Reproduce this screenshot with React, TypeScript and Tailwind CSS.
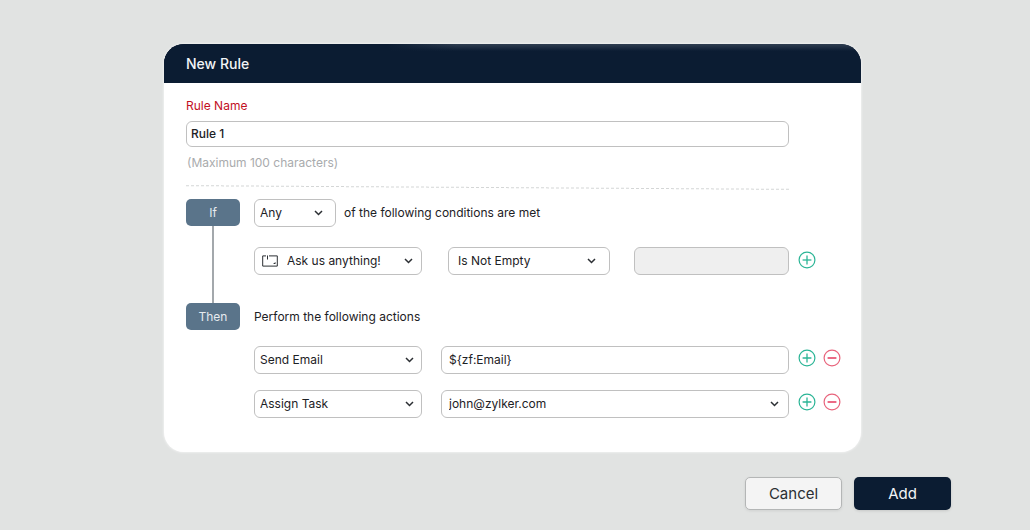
import React from 'react';

const font = { fontFamily: 'Inter, "Noto Sans", sans-serif' };

const Chevron = () => (
  <svg viewBox="0 0 9 6" className="h-[6px] w-[9px] shrink-0" fill="none" stroke="#2b2f33" strokeWidth="1.5">
    <path d="M1 1 4.5 4.5 8 1" />
  </svg>
);

const Circle = ({ minus }: { minus?: boolean }) => {
  const color = minus ? '#e8647c' : '#2bb596';
  return (
    <svg viewBox="0 0 18 18" className="h-[18px] w-[18px]" fill="none" stroke={color} strokeWidth="1.2">
      <circle cx="9" cy="9" r="7.9" />
      <path d="M4.6 9h8.8" stroke={minus ? '#e5385c' : color} strokeWidth="1.3" />
      {!minus && <path d="M9 4.6v8.8" strokeWidth="1.3" />}
    </svg>
  );
};

const Select = ({ label, className, icon }: { label: string; className: string; icon?: boolean }) => (
  <div className={`flex h-[28px] shrink-0 items-center rounded-[6px] border-[1.5px] border-[#c0c0c0] bg-white text-[12px] text-[#1d2125] ${className}`}>
    {icon && (
      <svg viewBox="0 0 16 12" className="ml-[2px] mr-[9px] h-[12px] w-[16px]" fill="none" stroke="#2b2f33" strokeWidth="1">
        <path d="M4 .9H.7v10.2h14.6V.9H7" />
        <path d="M5.5 .5v4" />
        <path d="M11 9h2.5V7z" fill="#2b2f33" stroke="none" />
      </svg>
    )}
    <span className="flex-1 truncate">{label}</span>
    <Chevron />
  </div>
);

const Badge = ({ label }: { label: string }) => (
  <div className="flex h-[27px] w-[54px] items-center justify-center rounded-[5px] bg-[#5a748a] text-[12px] text-[#e6ebef]">
    {label}
  </div>
);

export default function App() {
  return (
    <div className="flex h-[530px] w-[1030px] flex-col overflow-hidden bg-[#e1e3e2] pl-[164px] pt-[44px]" style={font}>
      <div className="h-[408px] w-[697px] overflow-hidden rounded-[20px] bg-white shadow-[0_0_3px_rgba(255,255,255,0.9)]">
        <div className="flex h-[39px] items-center bg-[#0b1c32] bg-[linear-gradient(90deg,#0b1c32_32%,transparent_42%),linear-gradient(180deg,#2f3e51,#0b1c32_7px)] pl-[22px] text-[14px] font-medium text-[#f2f4f6]">New Rule</div>

        <div className="pl-[22px] pr-[20px] pt-[15px]">
          <div className="text-[12px] leading-[15px] text-[#c2101f]">Rule Name</div>
          <div className="mt-[8px] flex h-[26px] w-[603px] items-center rounded-[6px] border-[1.5px] border-[#c0c0c0] pl-[4px] text-[12px] font-medium text-[#1d2125]">
            Rule 1
          </div>
          <div className="mt-[8px] pl-[1px] text-[12px] leading-[16px] text-[#a9abad]">(Maximum 100 characters)</div>
          <div className="mt-[16px] w-[603px] rotate-[0.35deg] border-t border-dashed border-[#d4d6d6]" />

          <div className="mt-[11px] flex gap-[14px]">
            <div className="flex w-[54px] flex-col items-center">
              <Badge label="If" />
              <div className="h-[77px] w-[2px] bg-[#a3a8ac]" />
              <Badge label="Then" />
            </div>

            <div className="flex-1">
              <div className="flex items-center gap-[8px]">
                <Select label="Any" className="w-[82px] pl-[5px] pr-[12px]" />
                <span className="text-[12px] text-[#1d2125]">of the following conditions are met</span>
              </div>

              <div className="mt-[20px] flex items-start">
                <Select label="Ask us anything!" className="w-[168px] pl-[5px] pr-[8px]" icon />
                <Select label="Is Not Empty" className="ml-[26px] w-[162px] pl-[9px] pr-[13px]" />
                <div className="ml-[24px] h-[28px] w-[155px] shrink-0 rounded-[6px] border-[1.5px] border-[#c0c0c0] bg-[#efefef]" />
                <div className="ml-[9px] mt-[4px]">
                  <Circle />
                </div>
              </div>

              <div className="mt-[28px] flex h-[27px] items-center text-[12px] text-[#1d2125]">Perform the following actions</div>
            </div>
          </div>

          <div className="ml-[68px] mt-[16px] flex flex-col gap-[16px]">
            <div className="flex items-start">
              <Select label="Send Email" className="w-[168px] pl-[5px] pr-[7px]" />
              <div className="ml-[19px] flex h-[28px] w-[348px] shrink-0 items-center rounded-[6px] border-[1.5px] border-[#c0c0c0] pl-[7px] text-[12px] text-[#1d2125]">
                {'${zf:Email}'}
              </div>
              <div className="ml-[9px] mt-[3px] flex gap-[7px]">
                <Circle />
                <Circle minus />
              </div>
            </div>
            <div className="flex items-start">
              <Select label="Assign Task" className="w-[168px] pl-[5px] pr-[7px]" />
              <Select label="john@zylker.com" className="ml-[19px] w-[348px] pl-[7px] pr-[9px]" />
              <div className="ml-[9px] mt-[3px] flex gap-[7px]">
                <Circle />
                <Circle minus />
              </div>
            </div>
          </div>
        </div>
      </div>

      <div className="mt-[25px] flex justify-end gap-[12px] pr-[79px] text-[15px]">
        <button className="h-[33px] w-[97px] rounded-[5px] border border-[#b4b6b6] bg-[#f4f4f4] pt-[1px] text-[#2b2f33] shadow-[0_1px_3px_rgba(0,0,0,0.08)]">Cancel</button>
        <button className="h-[33px] w-[97px] rounded-[5px] bg-[#0b1c32] pt-[1px] text-[#f2f4f6] shadow-[0_1px_3px_rgba(0,0,0,0.12)]">Add</button>
      </div>
    </div>
  );
}
